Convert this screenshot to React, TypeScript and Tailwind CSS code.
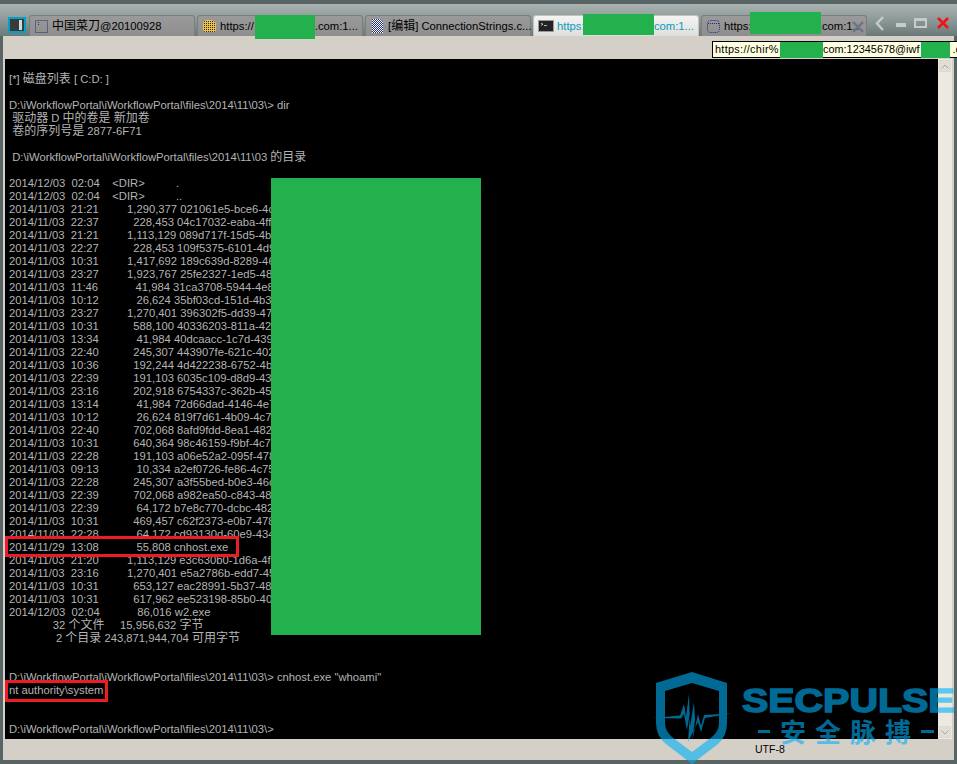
import React from 'react';

const ROWS: [string, string, string, string][] = [
    ['2014/11/03', '21:21', '1,290,377', '021061e5-bce6-4c8'],
    ['2014/11/03', '22:37', '228,453', '04c17032-eaba-4ffa'],
    ['2014/11/03', '21:21', '1,113,129', '089d717f-15d5-4b4'],
    ['2014/11/03', '22:27', '228,453', '109f5375-6101-4d9c'],
    ['2014/11/03', '10:31', '1,417,692', '189c639d-8289-468'],
    ['2014/11/03', '23:27', '1,923,767', '25fe2327-1ed5-48a'],
    ['2014/11/03', '11:46', '41,984', '31ca3708-5944-4e8c'],
    ['2014/11/03', '10:12', '26,624', '35bf03cd-151d-4b3c'],
    ['2014/11/03', '23:27', '1,270,401', '396302f5-dd39-476'],
    ['2014/11/03', '10:31', '588,100', '40336203-811a-428'],
    ['2014/11/03', '13:34', '41,984', '40dcaacc-1c7d-4397'],
    ['2014/11/03', '22:40', '245,307', '443907fe-621c-4027'],
    ['2014/11/03', '10:36', '192,244', '4d422238-6752-4bd'],
    ['2014/11/03', '22:39', '191,103', '6035c109-d8d9-438'],
    ['2014/11/03', '23:16', '202,918', '6754337c-362b-452'],
    ['2014/11/03', '13:14', '41,984', '72d66dad-4146-4e7'],
    ['2014/11/03', '10:12', '26,624', '819f7d61-4b09-4c79'],
    ['2014/11/03', '22:40', '702,068', '8afd9fdd-8ea1-4828'],
    ['2014/11/03', '10:31', '640,364', '98c46159-f9bf-4c74'],
    ['2014/11/03', '22:28', '191,103', 'a06e52a2-095f-4785'],
    ['2014/11/03', '09:13', '10,334', 'a2ef0726-fe86-4c75-'],
    ['2014/11/03', '22:28', '245,307', 'a3f55bed-b0e3-46db'],
    ['2014/11/03', '22:39', '702,068', 'a982ea50-c843-483'],
    ['2014/11/03', '22:39', '64,172', 'b7e8c770-dcbc-4827'],
    ['2014/11/03', '10:31', '469,457', 'c62f2373-e0b7-4780'],
    ['2014/11/03', '22:28', '64,172', 'cd93130d-60e9-4343'],
    ['2014/11/29', '13:08', '55,808', 'cnhost.exe'],
    ['2014/11/03', '21:20', '1,113,129', 'e3c630b0-1d6a-4fd'],
    ['2014/11/03', '23:16', '1,270,401', 'e5a2786b-edd7-452'],
    ['2014/11/03', '10:31', '653,127', 'eac28991-5b37-485'],
    ['2014/11/03', '10:31', '617,962', 'ee523198-85b0-405'],
    ['2014/12/03', '02:04', '86,016', 'w2.exe'],
];

const PROMPT = 'D:\\iWorkflowPortal\\iWorkflowPortal\\files\\2014\\11\\03\\>';

const LINES: string[] = [
    '[*] 磁盘列表 [ C:D: ]',
    '',
    `${PROMPT} dir`,
    ' 驱动器 D 中的卷是 新加卷',
    ' 卷的序列号是 2877-6F71',
    '',
    ' D:\\iWorkflowPortal\\iWorkflowPortal\\files\\2014\\11\\03 的目录',
    '',
    '2014/12/03  02:04    <DIR>          .',
    '2014/12/03  02:04    <DIR>          ..',
    ...ROWS.map(([d, t, s, n]) => `${d}  ${t} ${s.padStart(17, ' ')} ${n}`),
    '              32 个文件     15,956,632 字节',
    '               2 个目录 243,871,944,704 可用字节',
    '',
    '',
    `${PROMPT} cnhost.exe "whoami"`,
    'nt authority\\system',
    '',
    '',
    `${PROMPT}`,
];

// CJK runs are 12px in the console font, latin a little smaller
function Mixed({ text }: { text: string }) {
    const parts = text.split(/([\u4e00-\u9fff]+)/);
    return (
        <>
            {parts.map((p, i) =>
                i % 2 === 1 ? (
                    <span key={i} className="text-[12px]">
                        {p}
                    </span>
                ) : (
                    p
                ),
            )}
        </>
    );
}

function DotBox({ rounded = false }: { rounded?: boolean }) {
    return (
        <svg width="15" height="15" viewBox="0 0 15 15" className="shrink-0">
            <rect x="1.5" y="1.5" width="12" height="12" rx={rounded ? 3 : 0} fill="none" stroke="#1c2f78" strokeDasharray="1 1" />
            {rounded && <path d="M2 4.5h11" stroke="#1c2f78" strokeDasharray="1 1" />}
            {!rounded && <path d="M4.5 3v3" stroke="#1c2f78" strokeDasharray="1 1" />}
        </svg>
    );
}

function DitherIcon({ id, a, b, folder = false }: { id: string; a: string; b: string; folder?: boolean }) {
    return (
        <svg width="15" height="14" viewBox="0 0 15 14" className="shrink-0">
            <defs>
                <pattern id={id} width="2" height="2" patternUnits="userSpaceOnUse">
                    <rect width="2" height="2" fill={a} />
                    <rect width="1" height="1" fill={b} />
                    {!folder && <rect x="1" y="1" width="1" height="1" fill={b} />}
                </pattern>
            </defs>
            {folder ? (
                <path d="M1 4 L4 1 H10 L14 4 V12 L12 13 H3 L1 11 Z" fill={`url(#${id})`} />
            ) : (
                <path d="M2 0 H10 L13 3 V14 H2 Z" fill={`url(#${id})`} />
            )}
        </svg>
    );
}

function ConsoleIcon() {
    return (
        <svg width="16" height="12" viewBox="0 0 16 12" className="shrink-0">
            <rect x="0.5" y="0.5" width="15" height="11" fill="#222" stroke="#9a9a9a" />
            <path d="M3 3l2 1.2-2 1.2M6 5.5h3" stroke="#ddd" fill="none" strokeWidth="0.8" />
        </svg>
    );
}

function Tab({ icon, left, right, active = false }: { icon: React.ReactNode; left: string; right?: string; active?: boolean }) {
    return (
        <div
            className={`flex h-[21px] w-[166px] shrink-0 items-center gap-[3px] rounded-t-[3px] border border-b-0 pl-[4px] pr-[4px] text-[11.25px] whitespace-pre ${
                active
                    ? 'border-[#c4c4be] bg-gradient-to-b from-[#f4f4f2] to-[#dededa] text-[#0a9ac0]'
                    : 'border-[#777f7f] bg-gradient-to-b from-[#9a9a9a] to-[#8e8e8e] text-black'
            }`}
        >
            {icon}
            <span>
                <Mixed text={left} />
            </span>
            {right && <span className="ml-auto">{right}</span>}
        </div>
    );
}

function WindowButtons() {
    return (
        <svg width="84" height="20" viewBox="0 0 84 20" className="ml-[4px] mb-[5px]">
            <path d="M12 6 L6 12.5 L12 19" fill="none" stroke="#c5cdcc" strokeWidth="2.5" />
            <rect x="25" y="12" width="10" height="4" fill="#c5cdcc" />
            <rect x="44" y="8" width="11" height="8" fill="none" stroke="#c5cdcc" strokeWidth="2" />
            <rect x="43" y="7" width="13" height="3" fill="#c5cdcc" />
            <path d="M67 7 L77 17 M77 7 L67 17" stroke="#f01414" strokeWidth="2.6" />
        </svg>
    );
}

function ScrollButton({ up }: { up: boolean }) {
    return (
        <div className="flex h-[12px] w-[12px] items-center justify-center border border-[#dcd9d0] bg-[#e2ded6]">
            <svg width="8" height="5" viewBox="0 0 8 5">
                <path d={up ? 'M0.5 4.5 L4 1 L7.5 4.5' : 'M0.5 0.5 L4 4 L7.5 0.5'} fill="none" stroke="#a8a6a0" />
            </svg>
        </div>
    );
}

function Watermark() {
    return (
        <>
            <svg width="80" height="96" viewBox="0 0 80 96" className="absolute left-[650px] top-[668px] opacity-60">
                <path
                    fillRule="evenodd"
                    fill="#00b1f7"
                    d="M42 4 L77 15 V55 Q77 68 68 76 L42 96 L16 76 Q6 68 6 55 V15 Z M42 15 L15 23 V55 Q15 63 22 69 L42 84 L62 69 Q69 63 69 55 V23 Z"
                />
                <path
                    fill="#00b1f7"
                    d="M3 50 L30 47.5 L34 36 L36 49 L39 26 L40 58 L44 34 L45 52 L49 22 L42 74 L48 46 L51 58 L54 47 L81 45.5 L55 50 L51 64 L48 54 L38 74 L40 44 L37 62 L34 46 L31 50.5 Z"
                />
            </svg>
            <div className="absolute left-[742px] top-[680px] flex flex-col text-[#00b1f7] opacity-60">
                <span className="h-[40px] origin-left scale-x-[1.16] font-['Liberation_Sans',sans-serif] text-[34px] leading-[40px] font-bold whitespace-pre [-webkit-text-stroke:1.5px_#00b1f7]">
                    SECPULSE
                </span>
                <div className="ml-[16px] flex h-[22px] items-center gap-[9px] font-['Noto_Sans_CJK_SC',sans-serif] text-[26px] leading-[22px] font-bold">
                    <div className="mr-px h-[3px] w-[12px] bg-[#00b1f7]" />
                    <span>安</span>
                    <span>全</span>
                    <span>脉</span>
                    <span>搏</span>
                    <div className="ml-px h-[3px] w-[13px] bg-[#00b1f7]" />
                </div>
            </div>
        </>
    );
}

export default function App() {
    return (
        <div className="relative flex h-[764px] w-[957px] flex-col overflow-hidden bg-[#596565] font-['Liberation_Sans','Noto_Sans_CJK_SC',sans-serif]">
            {/* title strip + tabs */}
            <div className="flex h-[36px] items-end border-t-[4px] border-[#596464] bg-gradient-to-b from-[#a9b3b2] via-[#8d9998] to-[#6a7978] pl-[8px]">
                <div className="mb-[3px] mr-[3px] flex h-[16px] w-[18px] items-center justify-end border-2 border-[#00a2c9] bg-[#3a3a3a] pr-[2px]">
                    <div className="h-[10px] w-[3px] bg-[#d8d8d8]" />
                </div>
                <div className="flex gap-[2px]">
                    <Tab icon={<DotBox />} left="中国菜刀@20100928" />
                    <Tab icon={<DitherIcon id="d-folder" a="#eec24a" b="#2a2a2a" folder />} left="https://" right="e.com:1..." />
                    <Tab icon={<DitherIcon id="d-doc" a="#fff" b="#1c2f78" />} left="[编辑] ConnectionStrings.c..." />
                    <Tab icon={<ConsoleIcon />} left="https:" right=".com:1..." active />
                    <Tab icon={<DotBox rounded />} left="https:" right=".com:1..." />
                </div>
                <WindowButtons />
            </div>

            {/* toolbar band */}
            <div className="ml-[3px] mr-[3px] flex h-[23px] shrink-0 bg-[#d4d0c8]" />

            {/* console + scrollbar */}
            <div className="ml-[3px] mr-[3px] flex h-[680px] shrink-0 bg-[#d4d0c8] pl-[2px] pr-[2px]">
                <div className="h-full w-[933px] overflow-hidden bg-black pl-[4px] pt-[14px] text-[11.25px] leading-[13px] text-[#b4b4b4]">
                    {LINES.map((line, i) => (
                        <div key={i} className="h-[13px] whitespace-pre">
                            <Mixed text={line} />
                        </div>
                    ))}
                </div>
                <div className="flex w-[14px] flex-col items-center justify-between bg-[#ece9e0] py-px">
                    <ScrollButton up />
                    <ScrollButton up={false} />
                </div>
            </div>

            {/* status bar */}
            <div className="ml-[3px] mr-[3px] flex h-[21px] shrink-0 items-center bg-[#d4d0c8] pl-[752px] text-[10.5px] text-black">UTF-8</div>

            {/* tab url tooltip */}
            <div className="absolute left-[712px] top-[41px] flex h-[17px] w-[250px] items-center whitespace-pre border border-black bg-[#ffffe1] pl-[2px] text-[10.9px] text-black">
                <span className="w-[65px] shrink-0 tracking-[0.3px]">https://chir%</span>
                <div className="h-[16px] w-[43px] shrink-0 bg-[#22b14c]" />
                <span>com:12345678@iwf</span>
                <div className="ml-[2px] h-[16px] w-[29px] shrink-0 bg-[#22b14c]" />
                <span className="pl-[2px]">.c</span>
            </div>

            {/* tab 5 close button sits over the label */}
            <svg width="14" height="14" viewBox="0 0 14 14" className="absolute left-[851px] top-[20px]">
                <path d="M2 2 L12 12 M12 2 L2 12" stroke="#6c7484" strokeWidth="2.4" />
            </svg>

            {/* redaction blocks */}
            <div className="absolute left-[255px] top-[15px] h-[24px] w-[60px] bg-[#22b14c]" />
            <div className="absolute left-[583px] top-[14px] h-[21px] w-[71px] bg-[#22b14c]" />
            <div className="absolute left-[750px] top-[12px] h-[22px] w-[71px] bg-[#22b14c]" />
            <div className="absolute left-[271px] top-[178px] h-[457px] w-[210px] bg-[#22b14c]" />

            {/* annotation boxes */}
            <div className="absolute left-[5px] top-[536px] h-[21px] w-[234px] border-[3px] border-[#ed1c24]" />
            <div className="absolute left-[5px] top-[680px] h-[22px] w-[103px] border-[3px] border-[#ed1c24]" />

            <Watermark />
        </div>
    );
}
